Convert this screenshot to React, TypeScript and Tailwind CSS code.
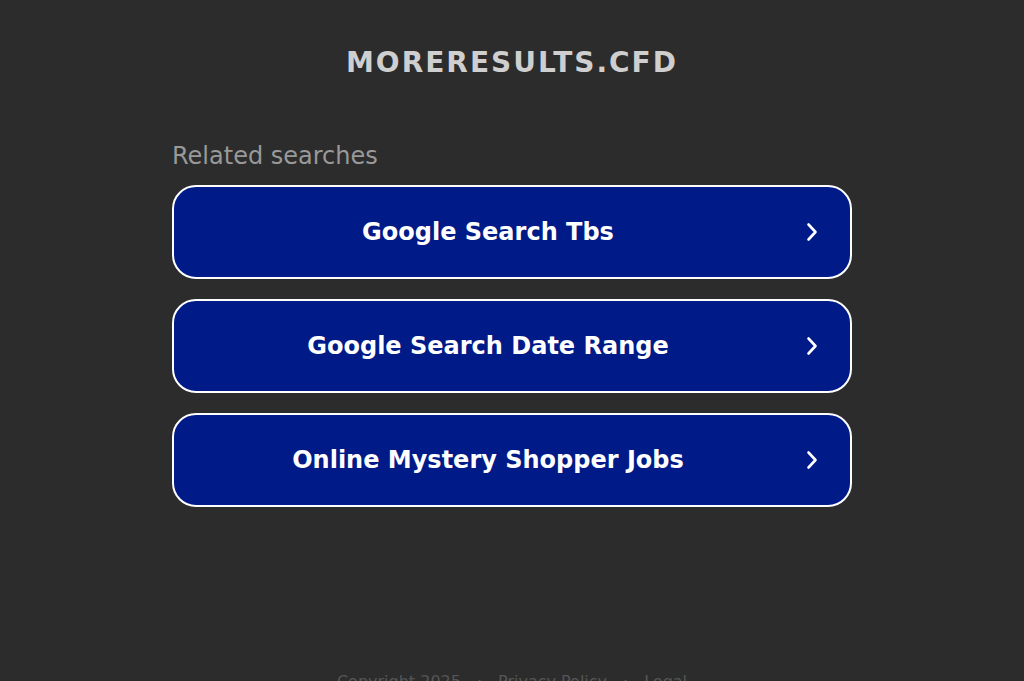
const searches = ['Google Search Tbs', 'Google Search Date Range', 'Online Mystery Shopper Jobs'];

function Chevron() {
  return (
    <svg width="12" height="20" viewBox="0 0 12 20" fill="none" stroke="currentColor" strokeWidth="2.6" strokeLinecap="round" strokeLinejoin="round">
      <polyline points="2.5,2.5 9.5,10 2.5,17.5" />
    </svg>
  );
}

export default function App() {
  return (
    <div className="min-h-screen bg-[#2c2c2c] font-['DejaVu_Sans',sans-serif] flex flex-col items-center overflow-hidden">
      <header className="pt-[49px] pb-[67px]">
        <h1 className="text-[28px] font-bold tracking-[2px] text-[#cfcfcf] leading-none">MORERESULTS.CFD</h1>
      </header>

      <main className="w-[680px]">
        <div className="text-[24px] text-[#999999] mb-[17px] leading-none">Related searches</div>
        <div className="flex flex-col gap-[20px]">
          {searches.map((s) => (
            <a
              key={s}
              href="#"
              className="relative flex items-center justify-center h-[94px] rounded-[24px] border-2 border-white bg-[#001a87] text-white"
            >
              <span className="text-[24px] font-bold pr-[48px]">{s}</span>
              <span className="absolute right-[32px] top-1/2 -translate-y-1/2 flex">
                <Chevron />
              </span>
            </a>
          ))}
        </div>
      </main>

      <footer className="mt-[167px] text-[16px] leading-none text-[#555555] flex gap-4 whitespace-nowrap">
        <span>Copyright 2025</span>
        <span>·</span>
        <span>Privacy Policy</span>
        <span>·</span>
        <span>Legal</span>
      </footer>
    </div>
  );
}
